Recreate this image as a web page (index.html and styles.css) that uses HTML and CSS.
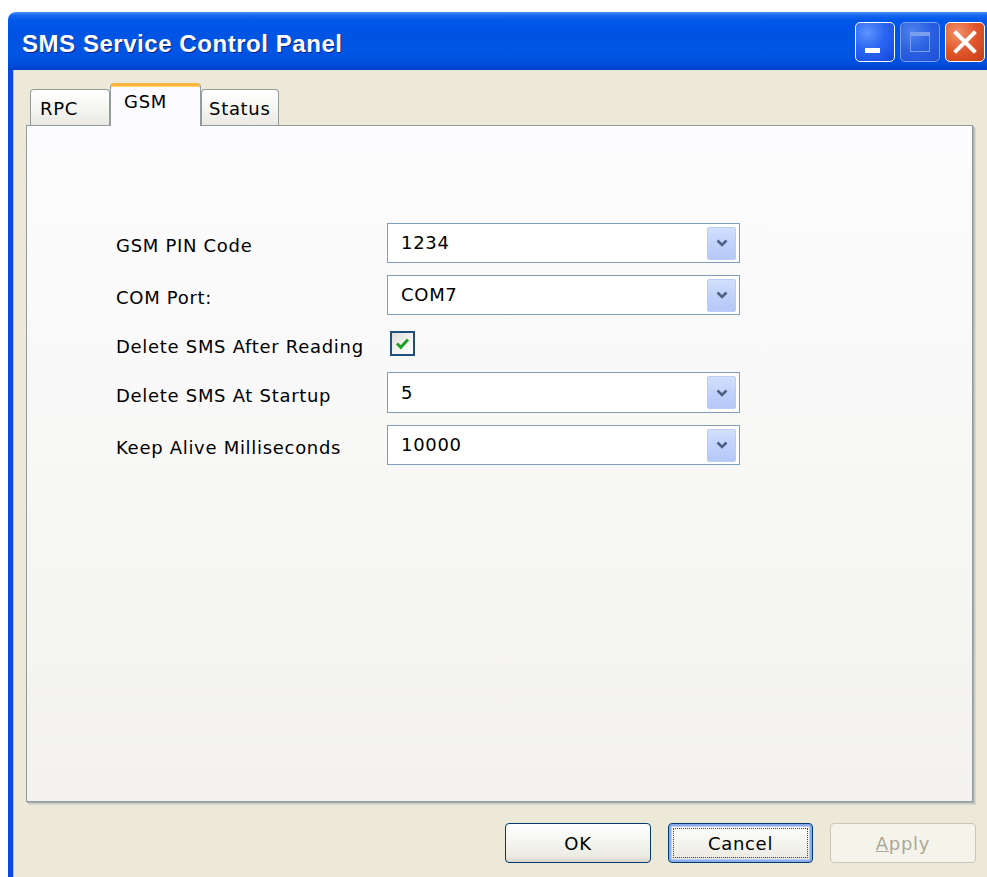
FILE: index.html
```html
<!DOCTYPE html>
<html lang="en">
<head>
<meta charset="utf-8">
<title>SMS Service Control Panel</title>
<link rel="stylesheet" href="styles.css">
</head>
<body>
<div class="window">
  <div class="titlebar">
    <span class="title">SMS Service Control Panel</span>
    <div class="caption-buttons">
      <span class="cap-btn cap-min"><span class="min-bar"></span></span>
      <span class="cap-btn cap-max"><span class="max-box"></span></span>
      <span class="cap-btn cap-close">
        <svg width="26" height="26" viewBox="0 0 26 26"><path d="M4 4 L22 22 M22 4 L4 22" stroke="#fff" stroke-width="4" stroke-linecap="square"/></svg>
      </span>
    </div>
  </div>
  <div class="client">
    <div class="tabs">
      <div class="tab tab-rpc">RPC</div>
      <div class="tab tab-gsm active">GSM</div>
      <div class="tab tab-status">Status</div>
    </div>
    <div class="panel">
      <div class="form">
        <div class="label">GSM PIN Code</div>
        <div class="combo"><span class="combo-text">1234</span><span class="combo-btn"><svg width="14" height="10" viewBox="0 0 14 10"><path d="M2.5 2.5 L7 7 L11.5 2.5" fill="none" stroke="#4d6185" stroke-width="2.6"/></svg></span></div>

        <div class="label">COM Port:</div>
        <div class="combo"><span class="combo-text">COM7</span><span class="combo-btn"><svg width="14" height="10" viewBox="0 0 14 10"><path d="M2.5 2.5 L7 7 L11.5 2.5" fill="none" stroke="#4d6185" stroke-width="2.6"/></svg></span></div>

        <div class="label">Delete SMS After Reading</div>
        <div class="check-cell"><span class="checkbox"><svg width="17" height="17" viewBox="0 0 17 17"><path d="M3 8.5 L6.8 12.3 L14 4.5" fill="none" stroke="#21a121" stroke-width="3"/></svg></span></div>

        <div class="label">Delete SMS At Startup</div>
        <div class="combo"><span class="combo-text">5</span><span class="combo-btn"><svg width="14" height="10" viewBox="0 0 14 10"><path d="M2.5 2.5 L7 7 L11.5 2.5" fill="none" stroke="#4d6185" stroke-width="2.6"/></svg></span></div>

        <div class="label">Keep Alive Milliseconds</div>
        <div class="combo"><span class="combo-text">10000</span><span class="combo-btn"><svg width="14" height="10" viewBox="0 0 14 10"><path d="M2.5 2.5 L7 7 L11.5 2.5" fill="none" stroke="#4d6185" stroke-width="2.6"/></svg></span></div>
      </div>
    </div>
    <div class="buttons">
      <button class="btn">OK</button>
      <button class="btn btn-focus"><span class="focus-ring">Cancel</span></button>
      <button class="btn btn-disabled" disabled><u>A</u>pply</button>
    </div>
  </div>
</div>
</body>
</html>
```
FILE: styles.css
```css
html, body {
  margin: 0;
  padding: 0;
  background: #ffffff;
  overflow: hidden;
}

body {
  width: 987px;
  height: 877px;
  font-family: "DejaVu Sans", "Liberation Sans", sans-serif;
  font-size: 18px;
  letter-spacing: 0.7px;
  color: #000;
}

.window {
  margin: 12px 0 0 8px;
  width: 979px;
  height: 865px;
  border-radius: 8px 0 0 0;
  overflow: hidden;
  display: flex;
  flex-direction: column;
}

/* ---- title bar ---- */
.titlebar {
  height: 58px;
  flex: none;
  display: flex;
  align-items: center;
  justify-content: space-between;
  padding-left: 14px;
  background: linear-gradient(to bottom,
    #4a96f8 0px, #1a68f0 3px, #0058ea 8px, #0054e3 20px,
    #0055e5 40px, #0050dd 50px, #0049d4 55px, #003fc6 58px);
}

.title {
  color: #fff;
  font-family: "Liberation Sans", Arial, sans-serif;
  font-weight: bold;
  font-size: 24px;
  letter-spacing: 0.55px;
  text-shadow: 1px 1px 0 #0a2585;
  padding-top: 6px;
}

.caption-buttons {
  display: flex;
  gap: 5px;
  padding-right: 2px;
  align-self: flex-start;
  margin-top: 10px;
}

.cap-btn {
  width: 38px;
  height: 38px;
  border: 1.5px solid #fff;
  border-radius: 5px;
  display: flex;
  align-items: center;
  justify-content: center;
  position: relative;
  background: radial-gradient(circle at 30% 25%, #5d93ff 0%, #2a66f0 45%, #1447dc 100%);
}

.cap-min .min-bar {
  position: absolute;
  left: 9px;
  top: 25px;
  width: 15px;
  height: 5px;
  background: #fff;
}

.cap-max {
  border-color: #7a9ef0;
  background: radial-gradient(circle at 30% 25%, #4f83ef 0%, #2a5fe0 50%, #1f4fd2 100%);
}

.cap-max .max-box {
  width: 18px;
  height: 15px;
  border: 1.5px solid #7a9ef0;
  border-top-width: 4px;
}

.cap-close {
  background: radial-gradient(circle at 30% 25%, #f0916b 0%, #e0562c 50%, #c53c13 100%);
}

/* ---- client area ---- */
.client {
  flex: 1;
  background: #ece9d8;
  border-left: 5px solid #0b47e0;
  box-shadow: inset 1px 0 0 #b9c3d8;
  padding: 13px 0 0 13px;
  display: flex;
  flex-direction: column;
}

.tabs {
  height: 42px;
  display: flex;
  align-items: flex-end;
  padding-left: 4px;
  position: relative;
  z-index: 1;
}

.tab {
  box-sizing: border-box;
  height: 36px;
  border: 1px solid #919b9c;
  border-bottom: none;
  border-radius: 4px 4px 0 0;
  background: linear-gradient(to bottom, #ffffff 0%, #f6f6f3 50%, #e9e8e2 100%);
  display: flex;
  align-items: center;
  justify-content: flex-start;
  padding-top: 2px;
}

.tab-rpc {
  width: 80px;
  padding-left: 9px;
}

.tab-gsm {
  width: 91px;
  height: 43px;
  margin-bottom: -1px;
  background: #fcfcfe;
  border-top: 3px solid #f8b73c;
  box-shadow: inset 0 1px 0 #ffd37a;
  padding-top: 0;
  padding-bottom: 9px;
  padding-left: 13px;
}

.tab-status {
  width: 78px;
  padding-left: 7px;
}

.panel {
  box-sizing: border-box;
  width: 947px;
  height: 677px;
  border: 1px solid #919b9c;
  box-shadow: 1px 1px 0 #a9aeb0, 2px 2px 0 #c5c8c6, 3px 3px 0 #d9d8cf;
  background: linear-gradient(to bottom, #fcfcfe 0%, #f8f8f7 45%, #f3f2ee 100%);
  padding: 97px 0 0 89px;
}

.form {
  display: grid;
  grid-template-columns: 271px 353px;
  grid-template-rows: 40px 40px 33px 41px 40px;
  row-gap: 12px;
  align-items: center;
}

.label {
  padding-top: 5px;
  white-space: nowrap;
}

.combo {
  box-sizing: border-box;
  height: 100%;
  border: 1px solid #7f9db9;
  background: #fff;
  display: flex;
  align-items: center;
  justify-content: space-between;
  padding: 0 3px 0 13px;
}

.combo-text {
  padding-bottom: 1px;
}

.combo-btn {
  box-sizing: border-box;
  width: 29px;
  height: 33px;
  border: 1px solid #b9cdf5;
  border-radius: 2px;
  background: linear-gradient(to bottom, #d3e0fd 0%, #c2d3fb 45%, #b5c8f7 100%);
  display: flex;
  align-items: center;
  justify-content: center;
}

.check-cell {
  display: flex;
  align-items: center;
  padding-left: 3px;
}

.checkbox {
  box-sizing: border-box;
  width: 25px;
  height: 25px;
  border: 2px solid #1c5180;
  background: linear-gradient(135deg, #dcdcd7 0%, #f2f2ef 50%, #ffffff 100%);
  display: flex;
  align-items: center;
  justify-content: center;
}

/* ---- dialog buttons ---- */
.buttons {
  margin-top: 21px;
  display: flex;
  justify-content: flex-end;
  gap: 17px;
  padding-right: 11px;
}

.btn {
  box-sizing: border-box;
  width: 146px;
  height: 40px;
  border: 1px solid #003c74;
  border-radius: 4px;
  background: linear-gradient(to bottom, #ffffff 0%, #f6f6f2 40%, #ecebe4 85%, #d8d5c9 100%);
  font-family: inherit;
  font-size: 18px;
  letter-spacing: 0.7px;
  color: #000;
  padding: 0;
  display: flex;
  align-items: center;
  justify-content: center;
}

.btn-focus {
  width: 145px;
  box-shadow: inset 0 0 0 2px #8aacea, inset 0 0 0 3px #bcd0f5;
}

.focus-ring {
  box-sizing: border-box;
  width: 135px;
  height: 30px;
  border: 1px dotted #444;
  display: flex;
  align-items: center;
  justify-content: center;
}

.btn-disabled {
  border-color: #c9c7ba;
  background: #f5f4ea;
  color: #aca899;
}
```
